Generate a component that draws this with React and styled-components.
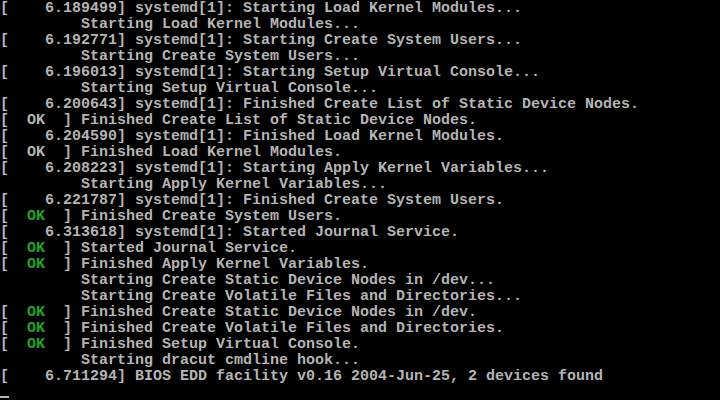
import React from "react";
import styled, { createGlobalStyle } from "styled-components";

const Global = createGlobalStyle`
  html, body { margin: 0; padding: 0; background: #000; }
  body { width: 720px; height: 400px; overflow: hidden; }
`;

const Screen = styled.div`
  width: 720px;
  height: 400px;
  background: #000;
  color: #b4b4b4;
  font-family: "Liberation Mono", "DejaVu Sans Mono", monospace;
  font-weight: bold;
  font-size: 15px;
  line-height: 16px;
  display: flex;
  flex-direction: column;
  overflow: hidden;
`;

const Line = styled.div`
  box-sizing: border-box;
  height: 16px;
  padding-top: 1px;
  white-space: pre;
`;

const Ok = styled.span`
  color: ${(p) => (p.$green ? "#1fa81f" : "#b4b4b4")};
`;

const Cursor = styled.div`
  height: 16px;
  display: flex;
  align-items: flex-end;
  &::before {
    content: "";
    display: block;
    width: 9px;
    height: 2px;
    margin-bottom: 2px;
    background: #b4b4b4;
  }
`;

const lines = [
  { t: "[    6.189499] systemd[1]: Starting Load Kernel Modules..." },
  { t: "         Starting Load Kernel Modules..." },
  { t: "[    6.192771] systemd[1]: Starting Create System Users..." },
  { t: "         Starting Create System Users..." },
  { t: "[    6.196013] systemd[1]: Starting Setup Virtual Console..." },
  { t: "         Starting Setup Virtual Console..." },
  { t: "[    6.200643] systemd[1]: Finished Create List of Static Device Nodes." },
  { ok: false, t: " Finished Create List of Static Device Nodes." },
  { t: "[    6.204590] systemd[1]: Finished Load Kernel Modules." },
  { ok: false, t: " Finished Load Kernel Modules." },
  { t: "[    6.208223] systemd[1]: Starting Apply Kernel Variables..." },
  { t: "         Starting Apply Kernel Variables..." },
  { t: "[    6.221787] systemd[1]: Finished Create System Users." },
  { ok: true, t: " Finished Create System Users." },
  { t: "[    6.313618] systemd[1]: Started Journal Service." },
  { ok: true, t: " Started Journal Service." },
  { ok: true, t: " Finished Apply Kernel Variables." },
  { t: "         Starting Create Static Device Nodes in /dev..." },
  { t: "         Starting Create Volatile Files and Directories..." },
  { ok: true, t: " Finished Create Static Device Nodes in /dev." },
  { ok: true, t: " Finished Create Volatile Files and Directories." },
  { ok: true, t: " Finished Setup Virtual Console." },
  { t: "         Starting dracut cmdline hook..." },
  { t: "[    6.711294] BIOS EDD facility v0.16 2004-Jun-25, 2 devices found" },
];

export default function App() {
  return (
    <>
      <Global />
      <Screen>
        {lines.map((l, i) =>
          l.ok === undefined ? (
            <Line key={i}>{l.t}</Line>
          ) : (
            <Line key={i}>
              {"[  "}
              <Ok $green={l.ok}>OK</Ok>
              {"  ]"}
              {l.t}
            </Line>
          )
        )}
        <Cursor />
      </Screen>
    </>
  );
}
